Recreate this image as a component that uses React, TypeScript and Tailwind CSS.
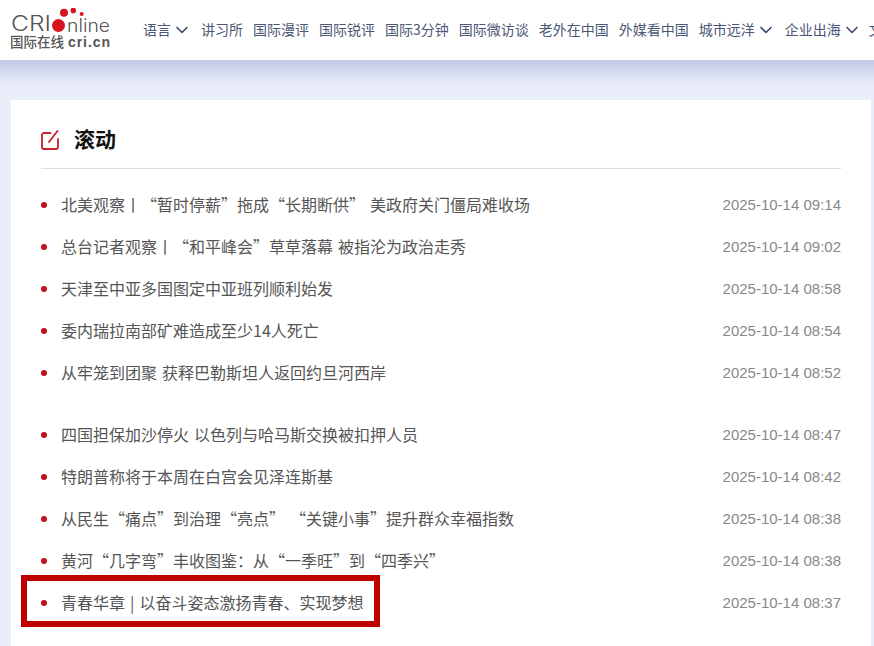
import React from 'react';
import { ChevronDown } from 'lucide-react';

const navItems = [
  { label: '语言', menu: true, gap: 'mr-[9px]' },
  { label: '讲习所', gap: 'mr-[10px]' },
  { label: '国际漫评', gap: 'mr-[10px]' },
  { label: '国际锐评', gap: 'mr-[10px]' },
  { label: '国际3分钟', gap: 'mr-[10px]' },
  { label: '国际微访谈', gap: 'mr-[10px]' },
  { label: '老外在中国', gap: 'mr-[10px]' },
  { label: '外媒看中国', gap: 'mr-[10px]' },
  { label: '城市远洋', menu: true, gap: 'mr-[9px]' },
  { label: '企业出海', menu: true, gap: 'mr-[7px]' },
  { label: '文旅', gap: '' },
];

const groups = [
  [
    { title: '北美观察丨“暂时停薪”拖成“长期断供” 美政府关门僵局难收场', time: '2025-10-14 09:14' },
    { title: '总台记者观察丨“和平峰会”草草落幕 被指沦为政治走秀', time: '2025-10-14 09:02' },
    { title: '天津至中亚多国图定中亚班列顺利始发', time: '2025-10-14 08:58' },
    { title: '委内瑞拉南部矿难造成至少14人死亡', time: '2025-10-14 08:54' },
    { title: '从牢笼到团聚 获释巴勒斯坦人返回约旦河西岸', time: '2025-10-14 08:52' },
  ],
  [
    { title: '四国担保加沙停火 以色列与哈马斯交换被扣押人员', time: '2025-10-14 08:47' },
    { title: '特朗普称将于本周在白宫会见泽连斯基', time: '2025-10-14 08:42' },
    { title: '从民生“痛点”到治理“亮点” “关键小事”提升群众幸福指数', time: '2025-10-14 08:38' },
    { title: '黄河“几字弯”丰收图鉴：从“一季旺”到“四季兴”', time: '2025-10-14 08:38' },
    { title: '青春华章 | 以奋斗姿态激扬青春、实现梦想', time: '2025-10-14 08:37', marked: true },
  ],
];

const Logo: React.FC = () => (
  <svg width="102" height="44" viewBox="0 0 102 44" className="shrink-0">
    <text x="1" y="23" fontFamily="Inter, sans-serif" fontWeight="300" fontSize="21" fill="#555" textLength="40" lengthAdjust="spacingAndGlyphs">CRI</text>
    <circle cx="48.5" cy="17.5" r="6.5" fill="#d7141d" />
    <circle cx="54" cy="4.7" r="4" fill="#d7141d" />
    <circle cx="63.3" cy="2.4" r="2.8" fill="#d7141d" />
    <circle cx="71.7" cy="6" r="2" fill="#d7141d" />
    <text x="57" y="24" fontFamily="Inter, sans-serif" fontWeight="300" fontSize="18" fill="#555" textLength="43" lengthAdjust="spacingAndGlyphs">nline</text>
    <text x="0" y="39" fontFamily="Noto Sans CJK SC, sans-serif" fontSize="13.5" fontWeight="500" fill="#555">国际在线</text>
    <text x="58" y="39" fontFamily="Liberation Sans, sans-serif" fontSize="14" fontWeight="700" fill="#555" textLength="42" lengthAdjust="spacing">cri.cn</text>
  </svg>
);

const EditIcon: React.FC = () => (
  <svg width="18" height="20" viewBox="0 0 18 20" fill="none" stroke="#c9202c" strokeWidth="1.8" strokeLinecap="round" strokeLinejoin="round" className="shrink-0">
    <path d="M9.5 3H3a2 2 0 0 0-2 2v12a2 2 0 0 0 2 2h12a2 2 0 0 0 2-2V9" />
    <path d="M8 12 16.5 1" />
  </svg>
);

export default function App() {
  return (
    <div className="h-[646px] overflow-hidden bg-[#eaeefb] font-['Noto_Sans_CJK_SC','Liberation_Sans',sans-serif]">
      <header className="h-[60px] bg-white flex items-center pl-[10px] overflow-hidden">
        <Logo />
        <nav className="flex items-center ml-[31px] text-[14px] text-[#4c5677] whitespace-nowrap">
          {navItems.map((item) => (
            <span key={item.label} className={`flex items-center shrink-0 ${item.gap}`}>
              <span className="pb-[2px]">{item.label}</span>
              {item.menu && <ChevronDown size={20} strokeWidth={2} className="ml-[1px] text-[#3f4a72]" />}
            </span>
          ))}
        </nav>
      </header>
      <div className="h-[26px] bg-gradient-to-b from-[#c3c9e7] to-[#eaeefb]" />

      <main className="ml-[11px] w-[860px] mt-[14px] h-[600px] bg-white px-[30px]">
        <div className="h-[69px] flex items-center border-b border-[#dddddd] pt-[12px] box-border">
          <EditIcon />
          <h2 className="ml-[15px] pb-[4px] text-[21px] leading-[28px] font-bold text-[#111111]">滚动</h2>
        </div>
        <div className="pt-[15px]">
          {groups.map((group, i) => (
            <ul key={i} className="mb-[20px]">
              {group.map((row) => (
                <li key={row.title} className="relative h-[42px] flex items-center justify-between">
                  <div className="flex items-center pb-[2px] text-[16px] text-[#555555] [word-spacing:1.5px]">
                    <span className="w-[6px] h-[6px] mt-[2px] rounded-full bg-[#c0101a] mr-[14px]" />
                    {row.title}
                  </div>
                  <span className="text-[15px] text-[#888888] font-['Liberation_Sans',sans-serif]">{row.time}</span>
                  {row.marked && (
                    <span className="absolute left-[-20px] top-[-7px] w-[359px] h-[52px] border-[6px] border-[#c00000]" />
                  )}
                </li>
              ))}
            </ul>
          ))}
        </div>
      </main>
    </div>
  );
}
